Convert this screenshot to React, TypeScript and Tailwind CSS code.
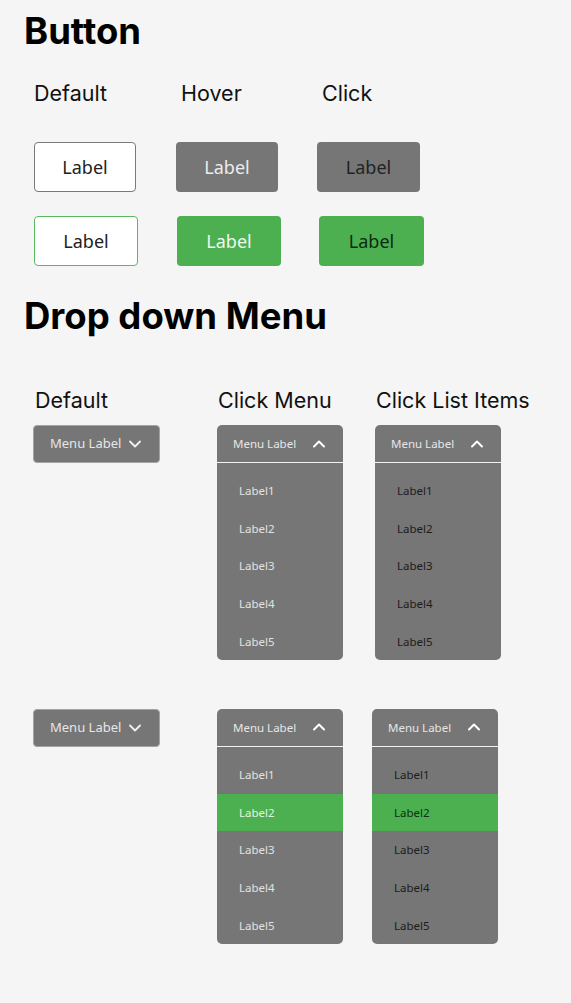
import { ChevronDown, ChevronUp } from 'lucide-react';

// --- Button samples ---
type BtnProps = { className: string; text: string };

function SampleButton({ className, text }: BtnProps) {
  return (
    <div
      className={`flex h-[50px] items-center justify-center rounded-[4px] font-['Noto_Sans',sans-serif] text-[18px] ${className}`}
    >
      {text}
    </div>
  );
}

// --- Dropdown samples ---
function ClosedMenu() {
  return (
    <div className="flex h-[38px] w-[127px] items-center rounded-[4px] border border-[#a3a3a3] bg-[#767676] pl-4 font-['Noto_Sans',sans-serif] text-[13px] text-[#e6e6e6]">
      <span>Menu Label</span>
      <ChevronDown size={20} strokeWidth={2.2} className="ml-[4px] text-[#f0f0f0]" />
    </div>
  );
}

type OpenMenuProps = {
  itemColor: string;
  activeIndex?: number;
  activeColor?: string;
};

const items = ['Label1', 'Label2', 'Label3', 'Label4', 'Label5'];

function OpenMenu({ itemColor, activeIndex, activeColor }: OpenMenuProps) {
  return (
    <div className="w-[126px] overflow-hidden rounded-[5px] bg-[#767676] font-['Noto_Sans',sans-serif]">
      <div className="flex h-[38px] items-center border-b-[1.5px] border-[#f2f2f2] pl-4 text-[11.5px] text-[#e6e6e6]">
        <span>Menu Label</span>
        <ChevronUp size={20} strokeWidth={2.4} className="ml-[13px] text-white" />
      </div>
      <div className="pt-[9px]">
        {items.map((item, i) => {
          const active = i === activeIndex;
          return (
            <div
              key={item}
              className={`flex h-[37.6px] items-center pl-[22px] text-[11.5px] ${active ? 'bg-[#4caf50]' : ''} ${active ? activeColor : itemColor}`}
            >
              {item}
            </div>
          );
        })}
      </div>
    </div>
  );
}

export default function App() {
  return (
    <div className="min-h-screen bg-[#f5f5f5] pl-6 pt-[13px] font-['Inter',sans-serif] text-black">
      {/* Button */}
      <h1 className="text-[36.5px] font-bold leading-[36px]">Button</h1>

      <div className="mt-[33px] flex text-[21.5px] leading-[22px] text-[#111]">
        <div className="ml-[10px] w-[147px]">Default</div>
        <div className="w-[141px]">Hover</div>
        <div>Click</div>
      </div>

      <div className="mt-[38px] flex">
        <SampleButton className="ml-[10px] w-[102px] border-[1.5px] border-[#7a7a7a] bg-white text-[#222]" text="Label" />
        <SampleButton className="ml-[40px] w-[102px] bg-[#767676] text-[#ececec]" text="Label" />
        <SampleButton className="ml-[39px] w-[103px] bg-[#767676] text-[#222]" text="Label" />
      </div>

      <div className="mt-[24px] flex">
        <SampleButton className="ml-[10px] w-[104px] border-[1.5px] border-[#5cb860] bg-white text-[#222]" text="Label" />
        <SampleButton className="ml-[39px] w-[104px] bg-[#4caf50] text-[#eef7ee]" text="Label" />
        <SampleButton className="ml-[38px] w-[105px] bg-[#4caf50] text-[#0f2a10]" text="Label" />
      </div>

      {/* Drop down Menu */}
      <h1 className="mt-[32px] text-[36.5px] font-bold leading-[36px]">Drop down Menu</h1>

      <div className="mt-[55px] flex text-[21.5px] leading-[22px] text-[#111]">
        <div className="ml-[11px] w-[183px]">Default</div>
        <div className="w-[158px]">Click Menu</div>
        <div>Click List Items</div>
      </div>

      <div className="mt-[14px] flex items-start">
        <div className="ml-[9px] w-[184px]">
          <ClosedMenu />
        </div>
        <div className="w-[158px]">
          <OpenMenu itemColor="text-[#e2e2e2]" />
        </div>
        <OpenMenu itemColor="text-[#1c1c1c]" />
      </div>

      <div className="mt-[49px] flex items-start">
        <div className="ml-[9px] w-[184px]">
          <ClosedMenu />
        </div>
        <div className="w-[155px]">
          <OpenMenu itemColor="text-[#e2e2e2]" activeIndex={1} activeColor="text-[#e4f4e4]" />
        </div>
        <OpenMenu itemColor="text-[#1c1c1c]" activeIndex={1} activeColor="text-[#103012]" />
      </div>
    </div>
  );
}
